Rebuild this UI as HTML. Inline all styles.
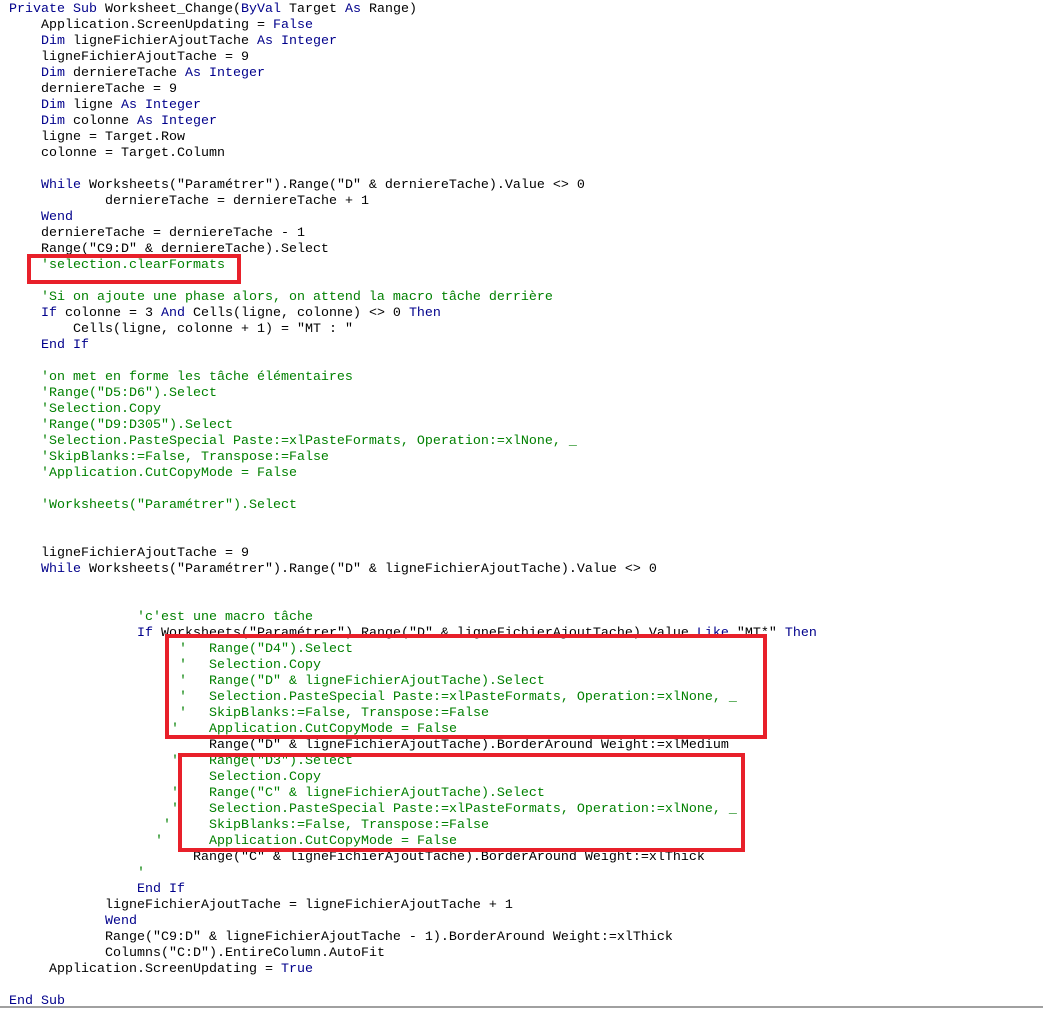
<!DOCTYPE html>
<html><head><meta charset="utf-8"><style>
html,body{margin:0;padding:0;background:#fff;width:1043px;height:1010px;overflow:hidden;position:relative}
#w{position:absolute;left:0;top:2px;width:1043px;height:1000px}
.l{position:absolute;white-space:pre;font-family:"Liberation Mono",monospace;font-size:13.33px;line-height:16px;height:16px;color:#000}
.k{color:#00008b}.c{color:#008000}
.box{position:absolute;border:4px solid #e8202a;box-sizing:border-box}
</style></head><body>
<div id="w">
<div class="l" style="left:9px;top:0px"><span class="k">Private Sub</span> Worksheet_Change(<span class="k">ByVal</span> Target <span class="k">As</span> Range)</div>
<div class="l" style="left:41px;top:16px">Application.ScreenUpdating = <span class="k">False</span></div>
<div class="l" style="left:41px;top:32px"><span class="k">Dim</span> ligneFichierAjoutTache <span class="k">As Integer</span></div>
<div class="l" style="left:41px;top:48px">ligneFichierAjoutTache = 9</div>
<div class="l" style="left:41px;top:64px"><span class="k">Dim</span> derniereTache <span class="k">As Integer</span></div>
<div class="l" style="left:41px;top:80px">derniereTache = 9</div>
<div class="l" style="left:41px;top:96px"><span class="k">Dim</span> ligne <span class="k">As Integer</span></div>
<div class="l" style="left:41px;top:112px"><span class="k">Dim</span> colonne <span class="k">As Integer</span></div>
<div class="l" style="left:41px;top:128px">ligne = Target.Row</div>
<div class="l" style="left:41px;top:144px">colonne = Target.Column</div>
<div class="l" style="left:41px;top:176px"><span class="k">While</span> Worksheets("Paramétrer").Range("D" &amp; derniereTache).Value &lt;&gt; 0</div>
<div class="l" style="left:105px;top:192px">derniereTache = derniereTache + 1</div>
<div class="l" style="left:41px;top:208px"><span class="k">Wend</span></div>
<div class="l" style="left:41px;top:224px">derniereTache = derniereTache - 1</div>
<div class="l" style="left:41px;top:240px">Range("C9:D" &amp; derniereTache).Select</div>
<div class="l c" style="left:41px;top:256px">'selection.clearFormats</div>
<div class="l c" style="left:41px;top:288px">'Si on ajoute une phase alors, on attend la macro tâche derrière</div>
<div class="l" style="left:41px;top:304px"><span class="k">If</span> colonne = 3 <span class="k">And</span> Cells(ligne, colonne) &lt;&gt; 0 <span class="k">Then</span></div>
<div class="l" style="left:73px;top:320px">Cells(ligne, colonne + 1) = "MT : "</div>
<div class="l k" style="left:41px;top:336px">End If</div>
<div class="l c" style="left:41px;top:368px">'on met en forme les tâche élémentaires</div>
<div class="l c" style="left:41px;top:384px">'Range("D5:D6").Select</div>
<div class="l c" style="left:41px;top:400px">'Selection.Copy</div>
<div class="l c" style="left:41px;top:416px">'Range("D9:D305").Select</div>
<div class="l c" style="left:41px;top:432px">'Selection.PasteSpecial Paste:=xlPasteFormats, Operation:=xlNone, _</div>
<div class="l c" style="left:41px;top:448px">'SkipBlanks:=False, Transpose:=False</div>
<div class="l c" style="left:41px;top:464px">'Application.CutCopyMode = False</div>
<div class="l c" style="left:41px;top:496px">'Worksheets("Paramétrer").Select</div>
<div class="l" style="left:41px;top:544px">ligneFichierAjoutTache = 9</div>
<div class="l" style="left:41px;top:560px"><span class="k">While</span> Worksheets("Paramétrer").Range("D" &amp; ligneFichierAjoutTache).Value &lt;&gt; 0</div>
<div class="l c" style="left:137px;top:608px">'c'est une macro tâche</div>
<div class="l" style="left:137px;top:624px"><span class="k">If</span> Worksheets("Paramétrer").Range("D" &amp; ligneFichierAjoutTache).Value <span class="k">Like</span> "MT*" <span class="k">Then</span></div>
<div class="l c" style="left:179px;top:640px">'</div><div class="l c" style="left:209px;top:640px">Range("D4").Select</div>
<div class="l c" style="left:179px;top:656px">'</div><div class="l c" style="left:209px;top:656px">Selection.Copy</div>
<div class="l c" style="left:179px;top:672px">'</div><div class="l c" style="left:209px;top:672px">Range("D" &amp; ligneFichierAjoutTache).Select</div>
<div class="l c" style="left:179px;top:688px">'</div><div class="l c" style="left:209px;top:688px">Selection.PasteSpecial Paste:=xlPasteFormats, Operation:=xlNone, _</div>
<div class="l c" style="left:179px;top:704px">'</div><div class="l c" style="left:209px;top:704px">SkipBlanks:=False, Transpose:=False</div>
<div class="l c" style="left:171px;top:720px">'</div><div class="l c" style="left:209px;top:720px">Application.CutCopyMode = False</div>
<div class="l" style="left:209px;top:736px">Range("D" &amp; ligneFichierAjoutTache).BorderAround Weight:=xlMedium</div>
<div class="l c" style="left:171px;top:752px">'</div><div class="l c" style="left:209px;top:752px">Range("D3").Select</div>
<div class="l c" style="left:209px;top:768px">Selection.Copy</div>
<div class="l c" style="left:171px;top:784px">'</div><div class="l c" style="left:209px;top:784px">Range("C" &amp; ligneFichierAjoutTache).Select</div>
<div class="l c" style="left:171px;top:800px">'</div><div class="l c" style="left:209px;top:800px">Selection.PasteSpecial Paste:=xlPasteFormats, Operation:=xlNone, _</div>
<div class="l c" style="left:163px;top:816px">'</div><div class="l c" style="left:209px;top:816px">SkipBlanks:=False, Transpose:=False</div>
<div class="l c" style="left:155px;top:832px">'</div><div class="l c" style="left:209px;top:832px">Application.CutCopyMode = False</div>
<div class="l" style="left:193px;top:848px">Range("C" &amp; ligneFichierAjoutTache).BorderAround Weight:=xlThick</div>
<div class="l c" style="left:137px;top:864px">'</div>
<div class="l k" style="left:137px;top:880px">End If</div>
<div class="l" style="left:105px;top:896px">ligneFichierAjoutTache = ligneFichierAjoutTache + 1</div>
<div class="l k" style="left:105px;top:912px">Wend</div>
<div class="l" style="left:105px;top:928px">Range("C9:D" &amp; ligneFichierAjoutTache - 1).BorderAround Weight:=xlThick</div>
<div class="l" style="left:105px;top:944px">Columns("C:D").EntireColumn.AutoFit</div>
<div class="l" style="left:49px;top:960px">Application.ScreenUpdating = <span class="k">True</span></div>
<div class="l k" style="left:9px;top:992px">End Sub</div>
</div>
<div class="box" style="left:27px;top:254px;width:214px;height:30px"></div>
<div class="box" style="left:165px;top:634px;width:602px;height:105px"></div>
<div class="box" style="left:178px;top:753px;width:567px;height:99px"></div>
<div style="position:absolute;left:0;top:1006px;width:1043px;height:2px;background:#a0a0a0"></div>
</body></html>
